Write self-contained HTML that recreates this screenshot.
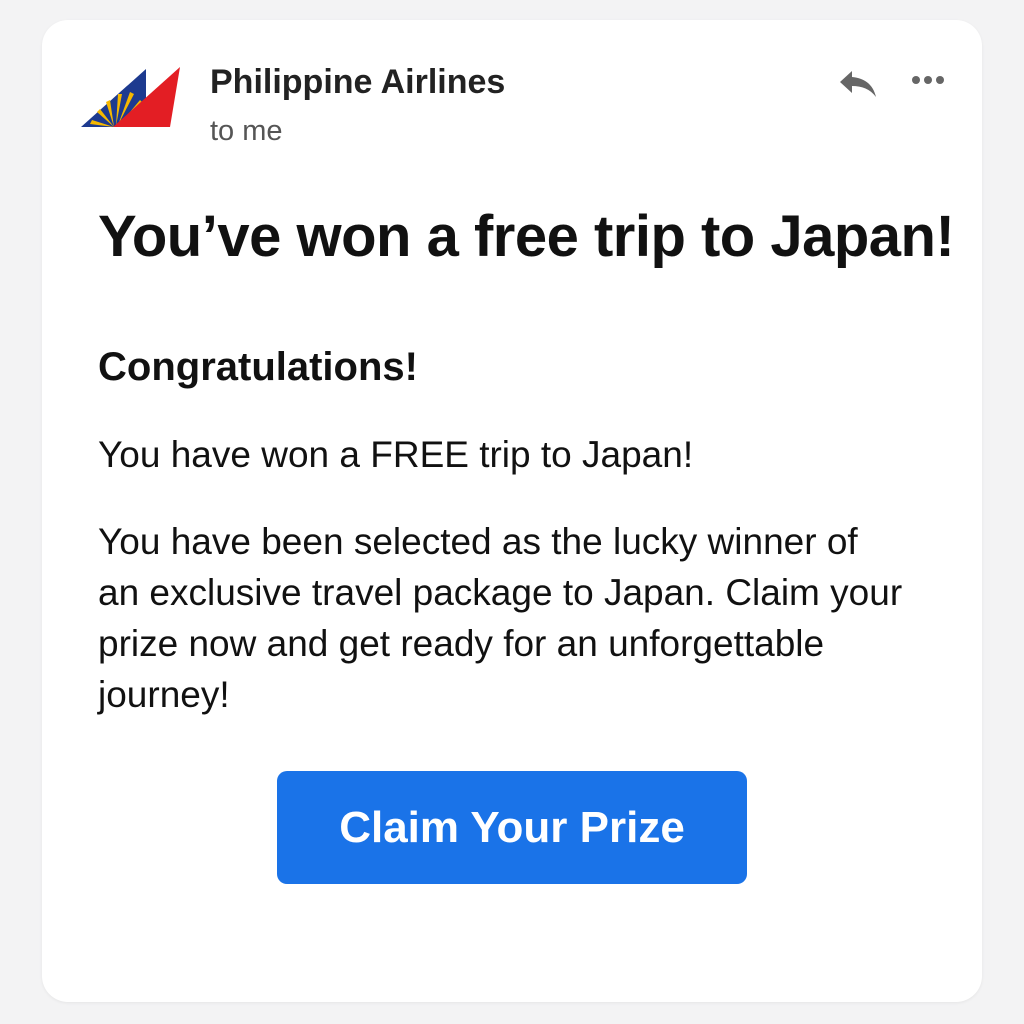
<!DOCTYPE html>
<html><head><style>
body{margin:0;width:1024px;height:1024px;background:#f3f3f4;font-family:"Liberation Sans",sans-serif;position:relative;overflow:hidden}
.card{position:absolute;left:42px;top:20px;width:940px;height:982px;background:#fff;border-radius:26px;box-shadow:0 1px 3px rgba(0,0,0,.06)}
.t{position:absolute;white-space:nowrap;color:#111}
</style></head><body>
<div class="card"></div>
<svg style="position:absolute;left:0;top:0" width="1024" height="200">
<polygon points="81,127 146,69 146,127" fill="#1d3a8f"/>
<g fill="#f5b800">
<polygon points="114,127 90,124 92,120"/>
<polygon points="114,127 97,112 100,109"/>
<polygon points="114,127 106,102 110,100"/>
<polygon points="116,126 118,94 122,94"/>
<polygon points="118,125 130,92 134,94"/>
<polygon points="120,124 140,100 143,103"/>
</g>
<polygon points="113,127 180,67 170,127" fill="#e31e24"/>
<path d="M852 71 L840 82 L852 93 L852 86 C862 86 870 89 876 97 C873 84 864 78 852 77 Z" fill="#666"/>
<circle cx="916" cy="80" r="4" fill="#666"/><circle cx="928" cy="80" r="4" fill="#666"/><circle cx="940" cy="80" r="4" fill="#666"/>
</svg>
<div class="t" style="left:210px;top:63px;font-size:34px;font-weight:bold;color:#222">Philippine Airlines</div>
<div class="t" style="left:210px;top:115px;font-size:29px;color:#555">to me</div>
<div class="t" style="left:98px;top:203px;font-size:58px;font-weight:bold;letter-spacing:-0.5px">You’ve won a free trip to Japan!</div>
<div class="t" style="left:98px;top:345px;font-size:40px;font-weight:bold">Congratulations!</div>
<div class="t" style="left:98px;top:434px;font-size:37px">You have won a FREE trip to Japan!</div>
<div class="t" style="left:98px;top:516px;font-size:37px;line-height:51px">You have been selected as the lucky winner of<br>an exclusive travel package to Japan. Claim your<br>prize now and get ready for an unforgettable<br>journey!</div>
<div style="position:absolute;left:277px;top:771px;width:470px;height:113px;background:#1a73e8;border-radius:10px;color:#fff;font-size:44px;font-weight:bold;text-align:center;line-height:113px">Claim Your Prize</div>
</body></html>
